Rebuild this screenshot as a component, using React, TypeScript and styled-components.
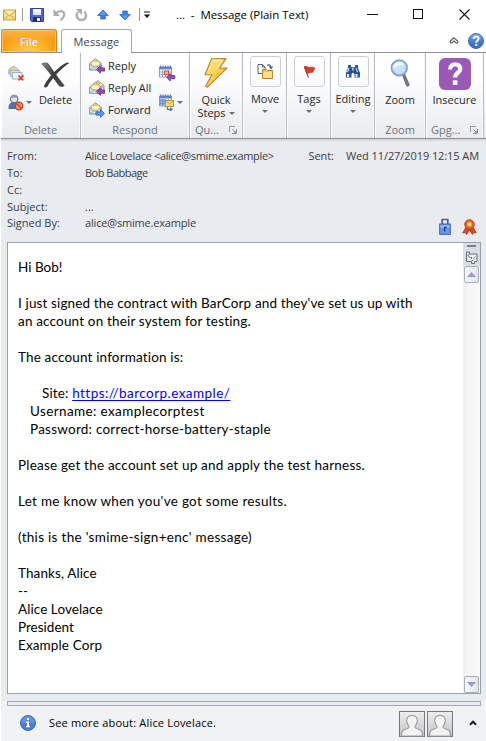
import React from "react";
import styled, { createGlobalStyle } from "styled-components";

const Global = createGlobalStyle`
  * { box-sizing: border-box; }
  html, body { margin: 0; background: #fff; }
  body { font-family: "Open Sans", "Noto Sans", sans-serif; font-size: 11px; color: #262626; overflow: hidden; }
  svg { display: block; flex: none; }
`;

const Window = styled.div`
  width: 486px; height: 741px; padding-left: 1px;
  display: flex; flex-direction: column; background: #fff; overflow: hidden;
`;
const TitleBar = styled.header`
  height: 29px; flex: none; display: flex; align-items: center; padding-left: 2px;
`;
const QuickAccess = styled.div`
  width: 173px; flex: none; display: flex; align-items: center;
`;
const Slot = styled.span<{ $w: number }>`
  width: ${p => p.$w}px; flex: none; display: flex; justify-content: center;
`;
const Title = styled.h1<{ $ls?: number }>`
  margin: 0; width: 178px; font-size: 11.5px; font-weight: 400; line-height: 16px; color: #000;
  letter-spacing: ${p => p.$ls ?? 0}px; white-space: pre;
`;
const WindowControls = styled.div`
  display: flex; align-items: center; gap: 35px; padding-left: 13px;
`;

const TabRow = styled.nav`
  height: 24px; flex: none; display: flex; align-items: flex-end;
  background: linear-gradient(#8c939d, #8c939d) bottom / 100% 1px no-repeat;
`;
const FileTab = styled.div`
  width: 56px; height: 23px; margin-bottom: 1px; display: flex; align-items: center; justify-content: center;
  color: #fff; border: 1px solid #e27d12; border-bottom: 0; border-radius: 3px 3px 0 0;
  background: radial-gradient(ellipse at 50% 110%, #ffd05a 0, #ffb52c 40%, transparent 75%), linear-gradient(#ffb24a, #f89a15 45%, #f9980b);
  box-shadow: inset 0 0 0 1px #ffc36a; text-shadow: 0 0 1px #a86200; font-weight: 600;
`;
const MessageTab = styled.div`
  width: 71px; height: 24px; margin-left: 4px; display: flex; align-items: center; justify-content: center;
  background: #fff; border: 1px solid #a3a8b0; border-bottom: 0; border-radius: 3px 3px 0 0; color: #3c4453;
  letter-spacing: 0.15px;
`;
const TabTools = styled.div`
  margin-left: auto; height: 24px; display: flex; align-items: center; gap: 9px; padding: 0 2px 1px 0;
`;

const Ribbon = styled.section`
  height: 86px; flex: none; display: flex;
  background: linear-gradient(#fff 0, #fdfdfe 35%, #eff1f3 75%, #e9ebee 100%);
  border-bottom: 1px solid #878c95;
`;
const Group = styled.div<{ $w: number }>`
  width: ${p => p.$w}px; flex: none; display: flex; flex-direction: column;
  border-right: 1px solid #b7bcc4; box-shadow: inset -1px 0 #f7f8fa, inset 1px 0 #fff;
`;
const GroupBody = styled.div`
  height: 69px; display: flex; padding-top: 1px;
`;
const GroupName = styled.div<{ $ls?: number; $launch?: boolean }>`
  height: 16px; padding: 0 5px; display: flex; align-items: center;
  justify-content: ${p => (p.$launch ? "space-between" : "center")};
  color: #6c7481; line-height: 16px; letter-spacing: ${p => p.$ls ?? 0}px;
`;
const SmallStack = styled.div<{ $w: number; $top: number; $gap: number; $left?: number }>`
  width: ${p => p.$w}px; flex: none; display: flex; flex-direction: column;
  padding: ${p => p.$top}px 0 0 ${p => p.$left ?? 0}px; gap: ${p => p.$gap}px;
`;
const SmallButton = styled.div<{ $ls?: number; $gap?: number }>`
  height: 18px; display: flex; align-items: center; gap: ${p => p.$gap ?? 3}px;
  letter-spacing: ${p => p.$ls ?? 0}px; line-height: 16px; white-space: nowrap;
`;
const BigButton = styled.div<{ $w: number }>`
  width: ${p => p.$w}px; flex: none; display: flex; flex-direction: column; align-items: center;
`;
const BigIcon = styled.div<{ $top?: number }>`
  height: 39px; padding: ${p => p.$top ?? 0}px 0 1px; display: flex; align-items: center; justify-content: center;
`;
const BigLabel = styled.span<{ $ls?: number }>`
  height: 13px; line-height: 13px; letter-spacing: ${p => p.$ls ?? 0}px; white-space: nowrap;
  display: flex; align-items: center; gap: 3px;
`;
const TileIcon = styled.div`
  width: 31px; height: 31px; margin: 2px 0 5px; display: flex; align-items: center; justify-content: center;
  border: 1px solid #ccd0d6; border-radius: 3px; background: linear-gradient(#fff, #f8f9fa);
`;
const DropArrow = styled.i<{ $mt?: number }>`
  width: 0; height: 0; margin-top: ${p => p.$mt ?? 0}px;
  border: 3px solid transparent; border-top-color: #6b6f76; border-bottom: 0;
`;

const Headers = styled.section`
  height: 103px; flex: none; background: #e8ebf0; border-top: 2px solid #d5d8dd;
  display: flex; justify-content: space-between; padding: 7px 7px 0 6px; color: #3b3b46;
`;
const HeaderGrid = styled.dl`
  margin: 0; display: grid; grid-template-columns: 78px 200px; grid-template-rows: 17px 17px 17px 16px 17px; line-height: 16px;
`;
const Term = styled.dt<{ $ls?: number }>`
  letter-spacing: ${p => p.$ls ?? 0}px; white-space: nowrap;
`;
const Value = styled.dd<{ $ls?: number }>`
  margin: 0; letter-spacing: ${p => p.$ls ?? 0}px; white-space: nowrap;
`;
const SentColumn = styled.div`
  display: flex; flex-direction: column; justify-content: space-between; align-items: flex-end; line-height: 16px;
`;
const Sent = styled.div<{ $ls?: number }>`
  display: flex; gap: 12px; letter-spacing: ${p => p.$ls ?? 0}px; white-space: nowrap;
`;
const Badges = styled.div`
  display: flex; align-items: center; gap: 11px; padding: 0 2px 7px 0;
`;

const BodyArea = styled.main`
  height: 459px; flex: none; background: #e8ebf0; padding: 0 5px 7px 6px; display: flex;
`;
const BodyBox = styled.div`
  flex: 1; border: 1px solid #9aa1ae; background: #fff; display: flex;
`;
const Letter = styled.article`
  flex: 1; padding: 15px 0 0 10px; font-family: Lato, "Open Sans", sans-serif; font-size: 13.5px; line-height: 18px; color: #000;
  font-variant-ligatures: none;
`;
const Line = styled.div<{ $ls?: number; $indent?: number }>`
  height: 18px; white-space: pre; letter-spacing: ${p => p.$ls ?? 0}px; padding-left: ${p => p.$indent ?? 0}px;
`;
const Link = styled.a`
  color: #00f; text-decoration: underline; text-underline-offset: 2px; letter-spacing: 0.46px;
`;
const Scroll = styled.aside`
  width: 17px; flex: none; display: flex; flex-direction: column; align-items: center;
  background: linear-gradient(90deg, #ededed, #f5f5f5 30%, #fcfcfc);
`;
const ScrollTools = styled.div`
  width: 17px; height: 23px; background: #d9dde4; display: flex; flex-direction: column; align-items: center; gap: 4px; padding-top: 2px;
`;
const SplitHandle = styled.div`
  width: 9px; height: 2px; background: #7c828b;
`;
const ScrollButton = styled.div<{ $end?: boolean }>`
  width: 15px; height: 17px; margin-top: ${p => (p.$end ? "auto" : 0)}; display: flex; align-items: center; justify-content: center;
  border: 1px solid #a9afba; border-radius: 2px; background: linear-gradient(90deg, #f7f8fa, #e2e5e9);
`;
const Footer = styled.footer`
  flex: 1; background: #f1f2f4; display: flex; flex-direction: column;
`;
const Splitter = styled.div`
  height: 5px; margin: 0 5px 0 6px; border: 1px solid #a2a8b3; background: #e8ebf0;
`;
const People = styled.div`
  flex: 1; display: flex; align-items: center; padding: 0 9px 1px 19px;
`;
const PeopleText = styled.span<{ $ls?: number }>`
  margin-left: 13px; color: #000; letter-spacing: ${p => p.$ls ?? 0}px; line-height: 16px;
`;
const Avatars = styled.div`
  margin-left: auto; margin-right: 16px; display: flex; gap: 2px; padding-top: 1px;
`;

const Sep = () => <svg width="1" height="13"><path d="M.5 0v13" stroke="#999" /></svg>;

const TitleMail = () => (
  <svg width="13" height="12" viewBox="0 0 13 12"><rect x=".5" y="1" width="12" height="10" fill="#fbe08a" stroke="#c39a3e" /><path d="M1 2l5.500 5L12 2M1 10.500l4-4M12 10.500l-4-4" fill="none" stroke="#c39a3e" /><path d="M1.500 1.800h10L6.500 6z" fill="#fff3bd" /></svg>
);
const Floppy = () => (
  <svg width="14" height="14" viewBox="0 0 14 14"><path d="M.5.5h13v13h-12l-1-1z" fill="#5568d2" stroke="#3340a3" /><path d="M3 1h8v6H3z" fill="#dfe7fb" /><path d="M3 1h8v3H3z" fill="#fff" /><path d="M3 9h8v5H3z" fill="#262e6d" /><path d="M7 10h3v3H7z" fill="#f4f6ff" /></svg>
);
const Undo = () => (
  <svg width="13" height="14" viewBox="0 0 13 14"><path d="M3 5.500c2.500-3.500 8.300-3 8.300.8 0 2.800-1.800 4.200-4 6" fill="none" stroke="#b0b0b0" strokeWidth="2.200" /><path d="M.5 1v7h6.500z" fill="#adadad" /></svg>
);
const Redo = () => (
  <svg width="13" height="14" viewBox="0 0 13 14"><path d="M3.500 3.800C0 7 2 12 6.500 12S12.500 7 9.300 3.500" fill="none" stroke="#b0b0b0" strokeWidth="2.400" /><path d="M1 1h6v6z" fill="#adadad" /></svg>
);
const BlueArrow = ({ down }: { down?: boolean }) => (
  <svg width="12" height="12" viewBox="0 0 12 12"><g transform={down ? "rotate(180 6 6)" : undefined}><path d="M6 1L11.300 6.500H8.300V10H3.700V6.500H.7z" fill="#3c7fe8" stroke="#2868cf" strokeWidth=".8" strokeLinejoin="round" /><path d="M6 2L9 5.600H3z" fill="#62a2fb" /></g></svg>
);
const Customize = () => (
  <svg width="8" height="8" viewBox="0 0 8 8"><path d="M1 1h6" stroke="#111" /><path d="M.8 3.500h6.400L4 7z" fill="#111" /></svg>
);
const Minimize = () => <svg width="11" height="11"><path d="M0 5.500h11" stroke="#111" /></svg>;
const Maximize = () => <svg width="11" height="11"><rect x=".5" y=".5" width="9" height="9" fill="none" stroke="#111" /></svg>;
const Close = () => <svg width="11" height="11"><path d="M.5.5l10 10M10.500.5l-10 10" stroke="#111" strokeWidth="1.100" /></svg>;
const Collapse = () => (
  <svg width="10" height="8" viewBox="0 0 10 8"><path d="M5 .8L8.700 4.200c.7 1.300-.8 2.300-1.900 1.500L5 4 3.200 5.700C2.100 6.500.6 5.500 1.300 4.200z" fill="#fff" stroke="#4c535d" strokeWidth="1.100" /></svg>
);
const Help = () => (
  <svg width="16" height="16" viewBox="0 0 16 16"><defs><linearGradient id="help" x2="0" y2="1"><stop stopColor="#83aceb" /><stop offset=".5" stopColor="#4a7fd4" /><stop offset="1" stopColor="#3368c0" /></linearGradient></defs><circle cx="8" cy="8" r="7.500" fill="url(#help)" stroke="#3f6fb9" /><path d="M5.600 6c0-3.200 5-3.200 5-.2 0 1.700-2.400 1.900-2.400 4" fill="none" stroke="#fff" strokeWidth="1.900" /><rect x="7.200" y="11" width="2" height="2" fill="#fff" /></svg>
);

const Envelope = ({ x = 0, y = 0 }: { x?: number; y?: number }) => (
  <g transform={`translate(${x} ${y})`}>
    <path d="M.5 5.500L6.500.6l6 4.900v6.500H.5z" fill="#f3cf6b" stroke="#86a0c6" />
    <path d="M2.500 3.500h8V8h-8z" fill="#fff4c4" stroke="#e2b64f" strokeWidth=".7" />
    <path d="M.8 6l5.700 4 5.700-4v5.700H.8z" fill="#e1ebf8" stroke="#7f9cc6" strokeWidth=".8" />
    <path d="M1 11.600l4-3M12 11.600l-4-3" stroke="#7f9cc6" strokeWidth=".8" />
  </g>
);
const ReplyIcon = () => (
  <svg width="17" height="16" viewBox="0 0 17 16"><Envelope x={1} /><path d="M8.500 11.500l3.800-3.800v2.200h4.200v3.200h-4.200v2.200z" fill="#9c4bb0" stroke="#6c2880" strokeWidth=".8" /></svg>
);
const ReplyAllIcon = () => (
  <svg width="17" height="16" viewBox="0 0 17 16"><Envelope x={3.500} /><Envelope x={1} y={1.500} /><path d="M8.500 11.600l3.800-3.800V10h4.200v3.200h-4.200v2.200z" fill="#9c4bb0" stroke="#6c2880" strokeWidth=".8" /></svg>
);
const ForwardIcon = () => (
  <svg width="17" height="16" viewBox="0 0 17 16"><Envelope x={1} /><path d="M16.500 11.500l-4-3.800v2.200H8v3.200h4.500v2.200z" fill="#5b9bf0" stroke="#2459b4" strokeWidth=".8" /></svg>
);
const JunkMails = () => (
  <svg width="17" height="16" viewBox="0 0 17 16"><path d="M.8 4.500L5.500 1l4.700 3.500V9H.8z" fill="#f3d88a" stroke="#7f98bd" strokeWidth=".8" /><rect x="2.500" y="5.500" width="9" height="6" fill="#dce6f4" stroke="#91a4c2" strokeWidth=".8" /><rect x="4.500" y="7.500" width="9.500" height="6.500" fill="#eef2f9" stroke="#91a4c2" strokeWidth=".8" /><path d="M10.500 10.500l4.700 4.800M15.500 10.300L10.500 15.300" stroke="#d93c24" strokeWidth="1.700" /></svg>
);
const Junk = () => (
  <svg width="16" height="17" viewBox="0 0 16 17"><path d="M1 14.500C1 10 2.500 8.500 6 8.500s5 1.500 5 6z" fill="#4c73b2" stroke="#34547f" strokeWidth=".8" /><circle cx="6.200" cy="5" r="3.800" fill="#e1e3e6" stroke="#596577" /><path d="M2.600 4.500c0-5 7.200-5 7.200 0C8 3 5 3 2.600 4.500z" fill="#8e9aaa" /><circle cx="11" cy="12" r="3.700" fill="#f6a48a" stroke="#d6421c" strokeWidth="1.600" /><path d="M8.600 9.600l4.800 4.800" stroke="#d6421c" strokeWidth="1.600" /></svg>
);
const BlackX = () => (
  <svg width="29" height="26" viewBox="0 0 29 26"><defs><linearGradient id="bx" x2="1" y2="1"><stop stopColor="#858585" /><stop offset=".5" stopColor="#3c3c3c" /><stop offset="1" stopColor="#4d4d4d" /></linearGradient></defs><path d="M.8 1.800C3 .7 5.500.7 7 1.500c4 5.500 10 14.500 16.200 22-1.300 1.300-3.200 1.300-4.700.6C13 17 6.500 7.500.8 1.800z" fill="url(#bx)" stroke="#333" strokeWidth=".6" /><path d="M28.300 1C21 5.500 11 16 6.300 24.700c-1 1.200-3 1-3.400-.5C6.500 16 17 4.500 26 .4z" fill="#3d3d3d" /></svg>
);
const Calendar = ({ mail }: { mail?: boolean }) => (
  <svg width="17" height="17" viewBox="0 0 17 17">
    <path d="M.5 2h12v10H.5z" fill="#fff" stroke="#7d9ad1" /><path d="M.5 2h12v2.500H.5z" fill="#5d86cf" />
    <path d="M1.500.500v2M4 .500v2M6.500.500v2M9 .500v2M11.500.500v2" stroke="#5d6d8d" strokeWidth=".9" />
    <path d="M3.500 5v7M6.500 5v7M9.500 5v7M1 7h11M1 9.500h11" stroke="#7fa0dc" strokeWidth=".9" />
    {mail ? (
      <g><path d="M1 5h6v6.500H1z" fill="#5e82c4" opacity=".65" /><rect x="6.500" y="6.500" width="8" height="6" fill="#fbdc81" stroke="#c08b29" strokeWidth=".9" /><path d="M6.800 7l3.700 3 3.700-3" fill="none" stroke="#c08b29" strokeWidth=".8" /><path d="M8.500 13v2.500h4M11 13.800l2 1.700-2 1.500" fill="none" stroke="#3c72c9" strokeWidth="1.200" /></g>
    ) : (
      <g><rect x="5.500" y="6" width="4" height="3.500" fill="#ffc0a5" stroke="#e44a2a" /><path d="M7.500 12.200l3.800-3.800v2.200h4.500v3.200h-4.500V16z" fill="#9c4bb0" stroke="#6c2880" strokeWidth=".8" /></g>
    )}
  </svg>
);
const Bolt = () => (
  <svg width="24" height="30" viewBox="0 0 24 30"><defs><linearGradient id="bolt" x2="1" y2="1"><stop stopColor="#fff0a0" /><stop offset=".5" stopColor="#fbcf4e" /><stop offset="1" stopColor="#e8941e" /></linearGradient></defs><path d="M7.500.8L22 .6l-6.500 9.600 7.500-.1L3.500 29.200l-2-1L8 16.800l-7-.1z" fill="url(#bolt)" stroke="#bd8127" strokeWidth="1.100" strokeLinejoin="round" /><path d="M8.500 2.300h9.500l-5.500 9" fill="none" stroke="#fff8cf" strokeWidth="1" /></svg>
);
const MoveIcon = () => (
  <svg width="17" height="17" viewBox="0 0 17 17"><path d="M1 1.500h4.500L8 4v6.500H1z" fill="#fff" stroke="#51658f" /><path d="M5.500 1.500V4h2.500" fill="none" stroke="#51658f" /><path d="M10 2.500c2-1.500 4-.5 4 2.500M12.300 3.500L14 5.500l1.700-2" fill="none" stroke="#37547e" strokeWidth="1.100" /><path d="M5.500 8V15.500h10V7.500h-5L9.500 6.300h-4z" fill="#f4c75c" stroke="#b78428" /><path d="M6.300 9h8.500v5.800H6.300z" fill="#fbdf8c" /></svg>
);
const Flag = () => (
  <svg width="13" height="13" viewBox="0 0 13 13"><path d="M1.500 2l4 10.500" stroke="#5c5450" strokeWidth="1.100" /><path d="M1.500 1.500c2-1 3 1 5 .8S9.500 2 12 3L9.500 7.500c-2-1-3 1.300-6 .7z" fill="#d6402b" stroke="#a82718" strokeWidth=".6" /></svg>
);
const Binoculars = () => (
  <svg width="16" height="15" viewBox="0 0 16 15"><path d="M3 1h3v2h4V1h3v3l2 5v4.500H9.500V9h-3v4.500H1V9l2-5z" fill="#2e589f" /><path d="M3.500 4h1L3 8.500H2zM10.500 4h1l1.500 4.500h-1zM2 10h2v3H2zM10.500 10h2v3h-2z" fill="#e4eefd" /><path d="M6.500 3.500h3v3h-3z" fill="#95b5e8" /><path d="M6.300 4v6M9.700 4v6M5 9H1.500M14.500 9H11" stroke="#1b3770" strokeWidth=".8" /></svg>
);
const Magnifier = () => (
  <svg width="21" height="29" viewBox="0 0 21 29"><path d="M12.500 16l2-1 4.700 10.500c.3 1.500-2 2.300-2.800 1z" fill="#797d84" stroke="#4f535a" strokeWidth=".7" /><circle cx="9.300" cy="8.800" r="7.900" fill="#c9e2fb" stroke="#8b9bb0" strokeWidth="1.500" /><path d="M2.500 10C3 2 11 1 15.500 6 10 5.500 6 7 2.500 10z" fill="#f1f9ff" /><circle cx="9.300" cy="8.800" r="6.700" fill="none" stroke="#85b6ec" strokeWidth=".7" /></svg>
);
const Insecure = () => (
  <svg width="32" height="32" viewBox="0 0 32 32"><rect width="32" height="32" rx="6" fill="#9b59b6" /><path d="M11 11.500c0-7 10.300-6.500 10.300-.7 0 4-5.200 3.800-5.200 8.700" fill="none" stroke="#fff" strokeWidth="4.200" /><rect x="13.800" y="22.300" width="4.700" height="4.700" rx=".8" fill="#fff" /></svg>
);
const Launcher = () => (
  <svg width="8" height="8" viewBox="0 0 8 8"><path d="M.5 6V.5H6M3 3l3.500 3.500M7.500 3v4.500H3" fill="none" stroke="#9197a1" /><path d="M4.500 7H7V4.500z" fill="#9197a1" /></svg>
);
const Padlock = () => (
  <svg width="12" height="17" viewBox="0 0 12 17"><path d="M3.200 7V1.500h5.600V7" fill="none" stroke="#56627c" strokeWidth="1.700" /><rect x=".7" y="6" width="10.600" height="10.300" fill="#6c98e6" stroke="#3560b8" /><path d="M1.500 7h9v3h-9z" fill="#93b8f3" /><path d="M5.500 13.500V9.500h2.300" fill="none" stroke="#233c80" strokeWidth="1.300" /></svg>
);
const Rosette = () => (
  <svg width="15" height="16" viewBox="0 0 15 16"><path d="M4 8L.7 14l2.500-.4 1.300 2L7.500 11l3 4.600 1.200-2 2.600.4L11 8z" fill="#d94922" stroke="#a52c0e" strokeWidth=".7" /><circle cx="7.500" cy="5.500" r="4.800" fill="#e85d2d" stroke="#b7350f" strokeWidth=".8" /><circle cx="7.500" cy="5.300" r="2.300" fill="#ffe26d" stroke="#f59a35" /></svg>
);
const PageTool = () => (
  <svg width="13" height="13" viewBox="0 0 13 13"><path d="M1.500 1h3v2H12v7.500H9.500v2H6.500v-2h-5z" fill="#eef0f3" stroke="#686e77" /><path d="M4.500 3l-2 2M3.500 5.500l2 1M6.500 6v2M8.500 7.500l2-1.500M6.500 10l2-1" fill="none" stroke="#555b64" strokeWidth=".9" /></svg>
);
const Tri = ({ down }: { down?: boolean }) => (
  <svg width="9" height="5" viewBox="0 0 9 5"><path d={down ? "M0 0h9L4.500 5z" : "M0 5h9L4.500 0z"} fill="#8f9fc8" /></svg>
);
const Info = () => (
  <svg width="16" height="16" viewBox="0 0 16 16"><circle cx="8" cy="8" r="7.500" fill="#4b7dd6" stroke="#3a68bb" /><path d="M1.500 7a6.500 6 0 0113 0C10 9 6 9 1.500 7z" fill="#739de4" opacity=".6" /><path d="M7 3h2v2H7zM6 6.500h3V11h1v1.200H6V11h1V7.700H6z" fill="#fff" /></svg>
);
const Avatar = () => (
  <svg width="26" height="26" viewBox="0 0 26 26"><defs><linearGradient id="av" x2="0" y2="1"><stop stopColor="#eee" /><stop offset="1" stopColor="#c2c3c5" /></linearGradient></defs><rect x=".5" y=".5" width="25" height="25" fill="url(#av)" stroke="#77797d" /><path d="M2.500 25c0-5.500 2-6.500 6-7.500 2-.6 1.700-2 1-3-3.500-5-1.500-10 3.500-10s7 5 3.500 10c-.7 1-1 2.400 1 3 4 1 6 2 6 7.500z" fill="#f3f3f3" stroke="#9b9da1" strokeWidth="1.100" /></svg>
);
const Chevron = () => (
  <svg width="8" height="6" viewBox="0 0 8 6"><path d="M1 4.700l3-3 3 3" fill="none" stroke="#1e1e1e" strokeWidth="2" /></svg>
);

const lines: { text?: string; ls?: number; indent?: number; link?: string }[] = [
  { text: "Hi Bob!" },
  {},
  { text: "I just signed the contract with BarCorp and they've set us up with", ls: 0.135 },
  { text: "an account on their system for testing.", ls: 0.17 },
  {},
  { text: "The account information is:", ls: 0.16 },
  {},
  { text: "Site: ", link: "https://barcorp.example/", indent: 24, ls: 0.15 },
  { text: "Username: examplecorptest", indent: 12, ls: 0.38 },
  { text: "Password: correct-horse-battery-staple", indent: 12, ls: 0.24 },
  {},
  { text: "Please get the account set up and apply the test harness.", ls: 0.21 },
  {},
  { text: "Let me know when you've got some results.", ls: 0.29 },
  {},
  { text: "(this is the 'smime-sign+enc' message)", ls: 0.3 },
  {},
  { text: "Thanks, Alice", ls: 0.1 },
  { text: "--", ls: 0.1 },
  { text: "Alice Lovelace", ls: 0.07 },
  { text: "President" },
  { text: "Example Corp", ls: 0.12 },
];

const tiles = [
  { name: "Move", icon: <MoveIcon />, w: 44 },
  { name: "Tags", icon: <Flag />, w: 44 },
  { name: "Editing", icon: <Binoculars />, w: 44 },
];

export default function App() {
  return (
    <Window>
      <Global />
      <TitleBar>
        <QuickAccess>
          <Slot $w={13}><TitleMail /></Slot>
          <Slot $w={13}><Sep /></Slot>
          <Slot $w={16}><Floppy /></Slot>
          <Slot $w={28}><Undo /></Slot>
          <Slot $w={17}><Redo /></Slot>
          <Slot $w={26}><BlueArrow /></Slot>
          <Slot $w={18}><BlueArrow down /></Slot>
          <Slot $w={10}><Sep /></Slot>
          <Slot $w={6}><Customize /></Slot>
        </QuickAccess>
        <Title $ls={-0.04}>...  -  Message (Plain Text)</Title>
        <WindowControls><Minimize /><Maximize /><Close /></WindowControls>
      </TitleBar>
      <TabRow>
        <FileTab>File</FileTab>
        <MessageTab>Message</MessageTab>
        <TabTools><Collapse /><Help /></TabTools>
      </TabRow>
      <Ribbon>
        <Group $w={80}>
          <GroupBody>
            <SmallStack $w={33} $top={10} $gap={11} $left={7}>
              <SmallButton><JunkMails /></SmallButton>
              <SmallButton $gap={2}><Junk /><DropArrow /></SmallButton>
            </SmallStack>
            <BigButton $w={43}><BigIcon $top={3}><BlackX /></BigIcon><BigLabel>Delete</BigLabel></BigButton>
          </GroupBody>
          <GroupName>Delete</GroupName>
        </Group>
        <Group $w={109}>
          <GroupBody>
            <SmallStack $w={76} $top={3} $gap={4} $left={7}>
              <SmallButton><ReplyIcon />Reply</SmallButton>
              <SmallButton><ReplyAllIcon />Reply All</SmallButton>
              <SmallButton><ForwardIcon />Forward</SmallButton>
            </SmallStack>
            <SmallStack $w={30} $top={10} $gap={11} $left={2}>
              <SmallButton><Calendar /></SmallButton>
              <SmallButton $gap={1}><Calendar mail /><DropArrow /></SmallButton>
            </SmallStack>
          </GroupBody>
          <GroupName $ls={0.1}>Respond</GroupName>
        </Group>
        <Group $w={53}>
          <GroupBody>
            <BigButton $w={52}>
              <BigIcon><Bolt /></BigIcon>
              <BigLabel>Quick</BigLabel>
              <BigLabel>Steps<DropArrow $mt={1} /></BigLabel>
            </BigButton>
          </GroupBody>
          <GroupName $launch>Qu...<Launcher /></GroupName>
        </Group>
        {tiles.map(t => (
          <Group $w={t.w} key={t.name}>
            <GroupBody>
              <BigButton $w={44}>
                <TileIcon>{t.icon}</TileIcon>
                <BigLabel>{t.name}</BigLabel>
                <DropArrow $mt={5} />
              </BigButton>
            </GroupBody>
          </Group>
        ))}
        <Group $w={51}>
          <GroupBody><BigButton $w={50}><BigIcon><Magnifier /></BigIcon><BigLabel>Zoom</BigLabel></BigButton></GroupBody>
          <GroupName>Zoom</GroupName>
        </Group>
        <Group $w={58}>
          <GroupBody><BigButton $w={57}><BigIcon $top={2}><Insecure /></BigIcon><BigLabel>Insecure</BigLabel></BigButton></GroupBody>
          <GroupName $launch>Gpg...<Launcher /></GroupName>
        </Group>
      </Ribbon>
      <Headers>
        <HeaderGrid>
          <Term>From:</Term><Value $ls={-0.34}>Alice Lovelace &lt;alice@smime.example&gt;</Value>
          <Term>To:</Term><Value $ls={-0.5}>Bob Babbage</Value>
          <Term>Cc:</Term><Value />
          <Term>Subject:</Term><Value>...</Value>
          <Term>Signed By:</Term><Value $ls={-0.18}>alice@smime.example</Value>
        </HeaderGrid>
        <SentColumn>
          <Sent $ls={-0.08}><span>Sent:</span><span>Wed 11/27/2019 12:15 AM</span></Sent>
          <Badges><Padlock /><Rosette /></Badges>
        </SentColumn>
      </Headers>
      <BodyArea>
        <BodyBox>
          <Letter>
            {lines.map((l, i) => (
              <Line key={i} $ls={l.ls} $indent={l.indent}>{l.text}{l.link && <Link>{l.link}</Link>}</Line>
            ))}
          </Letter>
          <Scroll>
            <ScrollTools><SplitHandle /><PageTool /></ScrollTools>
            <ScrollButton><Tri /></ScrollButton>
            <ScrollButton $end><Tri down /></ScrollButton>
          </Scroll>
        </BodyBox>
      </BodyArea>
      <Footer>
        <Splitter />
        <People>
          <Info />
          <PeopleText $ls={0.18}>See more about: Alice Lovelace.</PeopleText>
          <Avatars><Avatar /><Avatar /></Avatars>
          <Chevron />
        </People>
      </Footer>
    </Window>
  );
}
